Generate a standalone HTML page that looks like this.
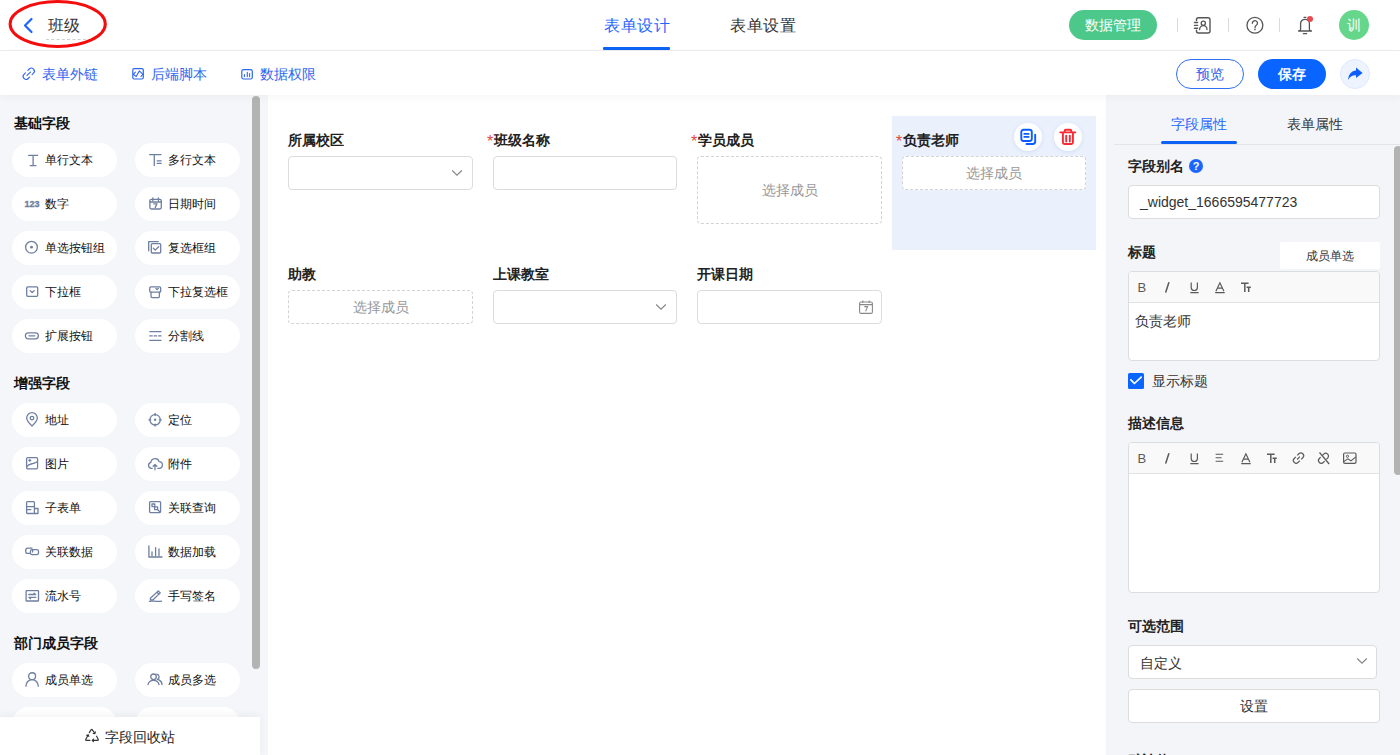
<!DOCTYPE html>
<html><head><meta charset="utf-8">
<style>
*{box-sizing:border-box;margin:0;padding:0}
html,body{width:1400px;height:755px;overflow:hidden;background:#fff;font-family:"Liberation Sans",sans-serif;color:#222}
.abs{position:absolute}
.t{position:absolute;white-space:nowrap;line-height:1}
/* header */
#hdr{position:absolute;left:0;top:0;width:1400px;height:51px;background:#fff;border-bottom:1px solid #ececec}
#bar{position:absolute;left:0;top:51px;width:1400px;height:44px;background:#fff;z-index:3;box-shadow:0 3px 8px rgba(0,0,0,0.035)}
.bluetxt{color:#2c66f0}
/* sidebar */
#side{position:absolute;left:0;top:95px;width:268px;height:660px;background:#f4f6fa}
.sec{position:absolute;left:14px;font-size:14px;font-weight:bold;color:#111;line-height:1}
.fb{position:absolute;width:105px;height:34px;border-radius:17px;background:#fff}
.fb svg{position:absolute;left:12px;top:8px;width:16px;height:16px;overflow:visible}
.fb span{position:absolute;left:33px;top:10px;font-size:12px;line-height:14px;color:#111;white-space:nowrap}
/* canvas */
.lbl{position:absolute;font-size:14px;font-weight:bold;color:#222;line-height:1;white-space:nowrap}
.req{color:#e8443a;font-weight:normal;font-size:16px;display:inline-block;width:6.5px;vertical-align:top;line-height:14px;position:relative;top:1.5px}
.inp{position:absolute;background:#fff;border:1px solid #dcdcdc;border-radius:4px}
.dash{position:absolute;border:1px dashed #d3d3d3;border-radius:4px;color:#999;font-size:14px;text-align:center;white-space:nowrap}
/* right */
#rp{position:absolute;left:1106px;top:95px;width:294px;height:660px;background:#f4f5f9}
.rl{position:absolute;font-size:14px;font-weight:bold;color:#222;line-height:1;white-space:nowrap}
</style></head>
<body>
<!-- HEADER -->
<div id="hdr">
  <svg class="abs" style="left:22px;top:17px" width="12" height="17" viewBox="0 0 12 17"><path d="M9.5 2 L3 8.5 L9.5 15" fill="none" stroke="#1f66ff" stroke-width="2.2" stroke-linecap="round" stroke-linejoin="round"/></svg>
  <div class="t" style="left:48px;top:18px;font-size:16px;color:#333">班级</div>
  <div class="abs" style="left:46px;top:39px;width:40px;border-top:1px dashed #d0d0d0"></div>
  <svg class="abs" style="left:0;top:0" width="120" height="52"><ellipse cx="57.7" cy="24" rx="47.6" ry="22.4" fill="none" stroke="#f50d0d" stroke-width="3"/></svg>

  <div class="t" style="left:604px;top:18px;font-size:16px;color:#1f66ff;letter-spacing:0.5px">表单设计</div>
  <div class="abs" style="left:603px;top:47px;width:67px;height:3px;background:#0b62f5;border-radius:1px"></div>
  <div class="t" style="left:730px;top:18px;font-size:16px;color:#333;letter-spacing:0.5px">表单设置</div>

  <div class="abs" style="left:1069px;top:10px;width:88px;height:30px;border-radius:15px;background:#4cc98a"></div>
  <div class="t" style="left:1085px;top:18px;font-size:14px;color:#fff">数据管理</div>
  <div class="abs" style="left:1177px;top:18px;width:1px;height:14px;background:#dadada"></div>
  <div class="abs" style="left:1228px;top:18px;width:1px;height:14px;background:#dadada"></div>
  <div class="abs" style="left:1279px;top:18px;width:1px;height:14px;background:#dadada"></div>

  <svg class="abs" style="left:1190px;top:12px" width="24" height="26" viewBox="1190 12 24 26"><path d="M1196.5 20.6V19.8A2 2 0 0 1 1198.5 17.8H1208A2 2 0 0 1 1210 19.8V31A2 2 0 0 1 1208 33H1198.5A2 2 0 0 1 1196.5 31V30.2M1194.5 22.5H1197.6M1194.5 25.4H1197.6M1194.5 28.2H1197.6" fill="none" stroke="#555" stroke-width="1.4" stroke-linecap="round"/><circle cx="1203.3" cy="23.2" r="2.1" fill="none" stroke="#555" stroke-width="1.3"/><path d="M1199.6 29.6A3.7 4 0 0 1 1207 29.6" fill="none" stroke="#555" stroke-width="1.3" stroke-linecap="round"/></svg>
  <svg class="abs" style="left:1242px;top:12px" width="26" height="26" viewBox="1242 12 26 26"><circle cx="1254.9" cy="25.25" r="7.95" fill="none" stroke="#555" stroke-width="1.3"/><path d="M1252.3 23.3A2.6 2.5 0 1 1 1256.3 25.3C1255.3 26 1255 26.6 1255 27.8" fill="none" stroke="#555" stroke-width="1.3" stroke-linecap="round"/><circle cx="1255" cy="29.6" r="0.8" fill="#555"/></svg>
  <svg class="abs" style="left:1292px;top:10px" width="26" height="28" viewBox="1292 10 26 28"><path d="M1300.6 29.3V23.5A4.4 4.2 0 0 1 1305 19.3A4.4 4.2 0 0 1 1309.4 23.5V29.3Q1309.6 30.6 1311.4 31H1298.6Q1300.4 30.6 1300.6 29.3ZM1304 17.3H1305.9M1303.4 33.7H1306.6" fill="none" stroke="#555" stroke-width="1.3" stroke-linecap="round" stroke-linejoin="round"/><circle cx="1310" cy="18.9" r="3" fill="#e84a4f"/></svg>
  <div class="abs" style="left:1339px;top:10px;width:30px;height:30px;border-radius:15px;background:#66d68a"></div>
  <div class="t" style="left:1347px;top:18px;font-size:14px;color:#fff">训</div>
</div>
<!-- TOOLBAR -->
<div id="bar">

  <svg class="abs" style="left:18px;top:11px" width="22" height="24" viewBox="18 62 22 24"><g transform="rotate(-45 28.75 73.75)" fill="none" stroke="#2c66f0" stroke-width="1.1" stroke-linecap="round"><path d="M27 70.8H25A2.95 2.95 0 0 0 25 76.7H27M30.5 70.8H32.5A2.95 2.95 0 0 1 32.5 76.7H30.5M26.3 73.75H31.2"/></g></svg>
  <svg class="abs" style="left:127px;top:11px" width="22" height="24" viewBox="127 62 22 24"><rect x="132.8" y="68.6" width="10.5" height="10.4" rx="1.5" fill="none" stroke="#2c66f0" stroke-width="1.2"/><path d="M135.4 72.2L133.3 74.3L136.2 76.6L139.3 70.9L143 74.3L141 76.4" fill="none" stroke="#2c66f0" stroke-width="1.1" stroke-linejoin="round" stroke-linecap="round"/></svg>
  <svg class="abs" style="left:236px;top:11px" width="22" height="24" viewBox="236 62 22 24"><rect x="241.8" y="69.6" width="10.5" height="9.4" rx="1.8" fill="none" stroke="#2c66f0" stroke-width="1.2"/><path d="M244.4 74.6V76.6M247.3 72.4V76.6M249.6 73.6V76.6" fill="none" stroke="#2c66f0" stroke-width="1.1" stroke-linecap="round"/></svg>
  <div class="t bluetxt" style="left:42px;top:16px;font-size:14px">表单外链</div>
  <div class="t bluetxt" style="left:151px;top:16px;font-size:14px">后端脚本</div>
  <div class="t bluetxt" style="left:260px;top:16px;font-size:14px">数据权限</div>
  <div class="abs" style="left:1176px;top:8px;width:68px;height:30px;border:1px solid #2d6ff5;border-radius:15px"></div>
  <div class="t" style="left:1196px;top:16px;font-size:14px;color:#2d62e8">预览</div>
  <div class="abs" style="left:1258px;top:8px;width:68px;height:30px;background:#0a64ff;border-radius:15px"></div>
  <div class="t" style="left:1278px;top:16px;font-size:14px;color:#fff;font-weight:bold">保存</div>
  <div class="abs" style="left:1340px;top:8px;width:30px;height:30px;background:#eef4ff;border:1px solid #dfe8fb;border-radius:15px"></div>

  <svg class="abs" style="left:1338px;top:6px" width="34" height="34" viewBox="1338 57 34 34"><path d="M1356 67.6L1362.6 72.9L1356 78.1V75.2C1352.3 75 1349.6 76.8 1348.1 80.1C1348.4 74.5 1351.5 70.7 1356 70.4Z" fill="#0d5ffc"/></svg>
</div>
<!-- SIDEBAR -->
<div id="side">
  <div class="sec" style="top:21px">基础字段</div>
  <div class="fb" style="left:12px;top:48px"><svg viewBox="0 0 16 16"><path d="M4.6 4.3H13.6M9.1 4.3V14.6M6.2 14.6H12" fill="none" stroke="#6f7fa0" stroke-width="1.3" stroke-linecap="round" stroke-linejoin="round"/></svg><span>单行文本</span></div>
  <div class="fb" style="left:135px;top:48px"><svg viewBox="0 0 16 16"><path d="M2.6 3.6H14M7.3 3.6V14.6M10.2 9.8H14.2M10.2 12.4H14.2" fill="none" stroke="#6f7fa0" stroke-width="1.3" stroke-linecap="round" stroke-linejoin="round"/></svg><span>多行文本</span></div>
  <div class="fb" style="left:12px;top:92px"><svg viewBox="0 0 16 16"><text x="8" y="11.9" text-anchor="middle" font-family="Liberation Sans" font-weight="700" font-size="9" fill="#6f7fa0" stroke="#6f7fa0" stroke-width="0.35">123</text></svg><span>数字</span></div>
  <div class="fb" style="left:135px;top:92px"><svg viewBox="0 0 16 16"><rect x="2.9" y="4.4" width="11.4" height="9.6" rx="1.4" fill="none" stroke="#6f7fa0" stroke-width="1.3" stroke-linecap="round" stroke-linejoin="round"/><path d="M2.9 7H14.3M5.8 3V5.5M11.4 3V5.5M6.8 8.8H10L8.2 12.6" fill="none" stroke="#6f7fa0" stroke-width="1.3" stroke-linecap="round" stroke-linejoin="round"/></svg><span>日期时间</span></div>
  <div class="fb" style="left:12px;top:136px"><svg viewBox="0 0 16 16"><circle cx="7.5" cy="8.2" r="5.85" fill="none" stroke="#6f7fa0" stroke-width="1.3" stroke-linecap="round" stroke-linejoin="round"/><circle cx="7.5" cy="8.2" r="1.4" fill="#6f7fa0"/></svg><span>单选按钮组</span></div>
  <div class="fb" style="left:135px;top:136px"><svg viewBox="0 0 16 16"><path d="M1.7 11.8V2.6H11.2" fill="none" stroke="#6f7fa0" stroke-width="1.3" stroke-linecap="round" stroke-linejoin="round"/><rect x="4.3" y="4.7" width="9.4" height="9.3" rx="1" fill="none" stroke="#6f7fa0" stroke-width="1.3" stroke-linecap="round" stroke-linejoin="round"/><path d="M6.4 9.3L8.3 11.1L11.6 7.7" fill="none" stroke="#6f7fa0" stroke-width="1.3" stroke-linecap="round" stroke-linejoin="round"/></svg><span>复选框组</span></div>
  <div class="fb" style="left:12px;top:180px"><svg viewBox="0 0 16 16"><rect x="2.7" y="3.9" width="11" height="9.4" rx="1" fill="none" stroke="#6f7fa0" stroke-width="1.3" stroke-linecap="round" stroke-linejoin="round"/><path d="M6.2 7.6L8.2 9.5L10.2 7.6" fill="none" stroke="#6f7fa0" stroke-width="1.3" stroke-linecap="round" stroke-linejoin="round"/></svg><span>下拉框</span></div>
  <div class="fb" style="left:135px;top:180px"><svg viewBox="0 0 16 16"><rect x="2.7" y="3.9" width="11" height="5.3" rx="1.2" fill="none" stroke="#6f7fa0" stroke-width="1.3" stroke-linecap="round" stroke-linejoin="round"/><path d="M4 9.2V13.6a1 1 0 0 0 1 1H11.4a1 1 0 0 0 1-1V9.2M8.8 5.4L10 6.6L11.3 5.4" fill="none" stroke="#6f7fa0" stroke-width="1.3" stroke-linecap="round" stroke-linejoin="round"/></svg><span>下拉复选框</span></div>
  <div class="fb" style="left:12px;top:224px"><svg viewBox="0 0 16 16"><rect x="1.4" y="5.9" width="13" height="5.9" rx="2.95" fill="none" stroke="#6f7fa0" stroke-width="1.3" stroke-linecap="round" stroke-linejoin="round"/><path d="M5 8.85H10.8" fill="none" stroke="#6f7fa0" stroke-width="1.3" stroke-linecap="round" stroke-linejoin="round"/></svg><span>扩展按钮</span></div>
  <div class="fb" style="left:135px;top:224px"><svg viewBox="0 0 16 16"><path d="M2.8 4.6H14M2.8 13.4H14M2.8 8.9H5.2M7.2 8.9H9.6M11.6 8.9H14" fill="none" stroke="#6f7fa0" stroke-width="1.3" stroke-linecap="round" stroke-linejoin="round"/></svg><span>分割线</span></div>
  <div class="sec" style="top:281px">增强字段</div>
  <div class="fb" style="left:12px;top:308px"><svg viewBox="0 0 16 16"><path d="M8 15C4.6 11.8 2.7 9.3 2.7 7A5.3 5.3 0 0 1 13.3 7C13.3 9.3 11.4 11.8 8 15Z" fill="none" stroke="#6f7fa0" stroke-width="1.3" stroke-linecap="round" stroke-linejoin="round"/><circle cx="8" cy="7.1" r="1.8" fill="none" stroke="#6f7fa0" stroke-width="1.3" stroke-linecap="round" stroke-linejoin="round"/></svg><span>地址</span></div>
  <div class="fb" style="left:135px;top:308px"><svg viewBox="0 0 16 16"><circle cx="8.1" cy="8.8" r="5.2" fill="none" stroke="#6f7fa0" stroke-width="1.3" stroke-linecap="round" stroke-linejoin="round"/><circle cx="8.1" cy="8.8" r="1.2" fill="#6f7fa0"/><path d="M8.1 2.5V4.4M8.1 13.2V15M1.9 8.8H3.8M12.4 8.8H14.3" fill="none" stroke="#6f7fa0" stroke-width="1.3" stroke-linecap="round" stroke-linejoin="round"/></svg><span>定位</span></div>
  <div class="fb" style="left:12px;top:352px"><svg viewBox="0 0 16 16"><rect x="2.6" y="2.6" width="11" height="11.3" rx="1.3" fill="none" stroke="#6f7fa0" stroke-width="1.3" stroke-linecap="round" stroke-linejoin="round"/><path d="M3 11.5C5.5 7.5 7.5 10.5 13.2 6.8M4.8 5.3H6.8M5.8 4.3V6.3" fill="none" stroke="#6f7fa0" stroke-width="1.3" stroke-linecap="round" stroke-linejoin="round"/></svg><span>图片</span></div>
  <div class="fb" style="left:135px;top:352px"><svg viewBox="0 0 16 16"><path d="M5.2 13.4H4.4A3.1 3.1 0 0 1 3.9 7.3A4.2 4.2 0 0 1 12.1 6.6A3.3 3.3 0 0 1 11.9 13.4H10.8" fill="none" stroke="#6f7fa0" stroke-width="1.3" stroke-linecap="round" stroke-linejoin="round"/><path d="M8 14.8V9.6M6.2 11.3L8 9.5L9.8 11.3" fill="none" stroke="#6f7fa0" stroke-width="1.3" stroke-linecap="round" stroke-linejoin="round"/></svg><span>附件</span></div>
  <div class="fb" style="left:12px;top:396px"><svg viewBox="0 0 16 16"><path d="M10.4 9.5V3.5a0.8 0.8 0 0 0-0.8-0.8H3.4a0.8 0.8 0 0 0-0.8 0.8V13.7a0.8 0.8 0 0 0 0.8 0.8H10.4V9.5H14V14.5H10.4M2.6 7.6H10.4M3 10.6H6.8" fill="none" stroke="#6f7fa0" stroke-width="1.3" stroke-linecap="round" stroke-linejoin="round"/></svg><span>子表单</span></div>
  <div class="fb" style="left:135px;top:396px"><svg viewBox="0 0 16 16"><rect x="2.6" y="2.6" width="11" height="11" rx="1" fill="none" stroke="#6f7fa0" stroke-width="1.3" stroke-linecap="round" stroke-linejoin="round"/><rect x="5" y="5" width="2.8" height="2.6" fill="none" stroke="#6f7fa0" stroke-width="1.3" stroke-linecap="round" stroke-linejoin="round"/><rect x="7.6" y="7.8" width="3" height="2.8" fill="none" stroke="#6f7fa0" stroke-width="1.3" stroke-linecap="round" stroke-linejoin="round"/><path d="M10.6 10.6L13 13" fill="none" stroke="#6f7fa0" stroke-width="1.3" stroke-linecap="round" stroke-linejoin="round"/></svg><span>关联查询</span></div>
  <div class="fb" style="left:12px;top:440px"><svg viewBox="0 0 16 16"><path d="M8 5.2H3.6A1.9 1.9 0 0 0 1.7 7.1V8.5A1.9 1.9 0 0 0 3.6 10.4H5.6" fill="none" stroke="#6f7fa0" stroke-width="1.3" stroke-linecap="round" stroke-linejoin="round"/><rect x="6.4" y="6.7" width="8.1" height="5" rx="1.8" fill="none" stroke="#6f7fa0" stroke-width="1.3" stroke-linecap="round" stroke-linejoin="round"/><path d="M8.6 6.7V9" fill="none" stroke="#6f7fa0" stroke-width="1.3" stroke-linecap="round" stroke-linejoin="round"/></svg><span>关联数据</span></div>
  <div class="fb" style="left:135px;top:440px"><svg viewBox="0 0 16 16"><path d="M1.9 3V14H15M5 8.8V12.6M8.6 4.6V12.6M12 6V12.6" fill="none" stroke="#6f7fa0" stroke-width="1.3" stroke-linecap="round" stroke-linejoin="round"/></svg><span>数据加载</span></div>
  <div class="fb" style="left:12px;top:484px"><svg viewBox="0 0 16 16"><rect x="2.1" y="3.6" width="12.4" height="10.4" rx="0.6" fill="none" stroke="#6f7fa0" stroke-width="1.3" stroke-linecap="round" stroke-linejoin="round"/><path d="M4.8 7.5H11.6L10 6.2M11.8 10.4H5L6.6 11.7" fill="none" stroke="#6f7fa0" stroke-width="1.3" stroke-linecap="round" stroke-linejoin="round"/></svg><span>流水号</span></div>
  <div class="fb" style="left:135px;top:484px"><svg viewBox="0 0 16 16"><path d="M3.4 11.3L11.3 3.9L13.3 5.9L5.8 13H3.4Z M10 5.2L12 7.2" fill="none" stroke="#6f7fa0" stroke-width="1.3" stroke-linecap="round" stroke-linejoin="round"/><path d="M2.5 14.3C5.5 13.4 8.5 14.9 14.5 14.2" fill="none" stroke="#6f7fa0" stroke-width="1.3" stroke-linecap="round" stroke-linejoin="round"/></svg><span>手写签名</span></div>
  <div class="sec" style="top:541px">部门成员字段</div>
  <div class="fb" style="left:12px;top:568px"><svg viewBox="0 0 16 16"><circle cx="8.1" cy="5.2" r="3.45" fill="none" stroke="#6f7fa0" stroke-width="1.3" stroke-linecap="round" stroke-linejoin="round"/><path d="M1.9 15.2A6.2 6.6 0 0 1 14.3 15.2" fill="none" stroke="#6f7fa0" stroke-width="1.3" stroke-linecap="round" stroke-linejoin="round"/></svg><span>成员单选</span></div>
  <div class="fb" style="left:135px;top:568px"><svg viewBox="0 0 16 16"><circle cx="6.5" cy="5.8" r="2.8" fill="none" stroke="#6f7fa0" stroke-width="1.3" stroke-linecap="round" stroke-linejoin="round"/><path d="M1 13.5A5.6 5.2 0 0 1 12 13.5M9.8 3.2A2.8 2.8 0 0 1 10.2 8.6M11.8 8.8A5.6 5.2 0 0 1 15 13.5" fill="none" stroke="#6f7fa0" stroke-width="1.3" stroke-linecap="round" stroke-linejoin="round"/></svg><span>成员多选</span></div>
  <div class="fb" style="left:12px;top:612px"><svg viewBox="0 0 16 16"></svg><span>部门单选</span></div>
  <div class="fb" style="left:135px;top:612px"><svg viewBox="0 0 16 16"></svg><span>部门多选</span></div>
  <div class="abs" style="left:252px;top:1px;width:8px;height:573px;border-radius:4px;background:#b3b3b3"></div>
  <div class="abs" style="left:0;top:622px;width:260px;height:38px;background:#fff;box-shadow:0 -2px 8px rgba(0,0,0,0.05)"></div>
  <svg class="abs" style="left:82px;top:631px" width="20" height="20" viewBox="82 726 20 20"><path d="M89.3 732.6L91.2 729.6Q91.7 728.9 92.2 729.6L94.7 733.3M93.2 733.5L94.9 733.6L95.3 731.9M88.3 734.8L85.7 739.5Q85.4 740.4 86.3 740.4H89.9M86.7 735.3L88.3 734.8L88.8 736.4M96.6 736.2L98.3 739.4Q98.6 740.4 97.6 740.4H92.2M93.5 739.1L92.2 740.4L93.5 741.7" fill="none" stroke="#333" stroke-width="1.15" stroke-linecap="round" stroke-linejoin="round"/></svg>
  <div class="t" style="left:105px;top:635px;font-size:14px;color:#222">字段回收站</div>
</div>
<!-- CANVAS -->
<div id="canvas">
  <div class="lbl" style="left:288px;top:133px">所属校区</div>
  <div class="inp" style="left:288px;top:156px;width:185px;height:34px"></div>
  <svg class="abs" style="left:451px;top:169px" width="12" height="8" viewBox="0 0 12 8"><path d="M1.2 1.5L6 6.2L10.8 1.5" fill="none" stroke="#858585" stroke-width="1.1"/></svg>

  <div class="lbl" style="left:487px;top:133px"><span class="req">*</span>班级名称</div>
  <div class="inp" style="left:493px;top:156px;width:184px;height:34px"></div>

  <div class="lbl" style="left:691px;top:133px"><span class="req">*</span>学员成员</div>
  <div class="dash" style="left:697px;top:156px;width:185px;height:68px;line-height:66px">选择成员</div>

  <div class="abs" style="left:892px;top:116px;width:204px;height:134px;background:#eaf1fd"></div>
  <div class="lbl" style="left:896px;top:133px"><span class="req">*</span>负责老师</div>
  <div class="dash" style="left:902px;top:156px;width:184px;height:34px;line-height:32px;background:#fff">选择成员</div>
  <div class="abs" style="left:1014px;top:123px;width:28px;height:28px;border-radius:14px;background:#fff;box-shadow:0 1px 4px rgba(40,80,160,0.12)"></div>
  <svg class="abs" style="left:1019px;top:128px" width="18" height="18" viewBox="0 0 18 18"><rect x="2.3" y="1.8" width="10.5" height="11.2" rx="2.2" fill="none" stroke="#0a5cff" stroke-width="1.9"/><path d="M5.3 5.9H9.6M5.3 8.9H9.6M16.2 6.6V13.6A2.4 2.4 0 0 1 13.8 16H7.5" fill="none" stroke="#0a5cff" stroke-width="1.9" stroke-linecap="round"/></svg>
  <div class="abs" style="left:1054px;top:123px;width:28px;height:28px;border-radius:14px;background:#fff;box-shadow:0 1px 4px rgba(40,80,160,0.12)"></div>
  <svg class="abs" style="left:1059px;top:128px" width="18" height="18" viewBox="0 0 18 18"><path d="M1.3 4.4H16.3M5.6 4.2V3.2A1.4 1.4 0 0 1 7 1.8H11A1.4 1.4 0 0 1 12.4 3.2V4.2M3.9 4.6V14.5A1.5 1.5 0 0 0 5.4 16H12.4A1.5 1.5 0 0 0 13.9 14.5V4.6M7.2 7.6V13.6M10.8 7.6V13.6" fill="none" stroke="#f52a35" stroke-width="1.9" stroke-linecap="round" stroke-linejoin="round"/></svg>

  <div class="lbl" style="left:288px;top:267px">助教</div>
  <div class="dash" style="left:288px;top:290px;width:185px;height:34px;line-height:32px">选择成员</div>

  <div class="lbl" style="left:493px;top:267px">上课教室</div>
  <div class="inp" style="left:493px;top:290px;width:184px;height:34px"></div>
  <svg class="abs" style="left:655px;top:303px" width="12" height="8" viewBox="0 0 12 8"><path d="M1.2 1.5L6 6.2L10.8 1.5" fill="none" stroke="#858585" stroke-width="1.1"/></svg>

  <div class="lbl" style="left:697px;top:267px">开课日期</div>
  <div class="inp" style="left:697px;top:290px;width:185px;height:34px"></div>
  <svg class="abs" style="left:858px;top:299px" width="16" height="16" viewBox="0 0 16 16"><rect x="1.6" y="3" width="12.8" height="11.4" rx="1.5" fill="none" stroke="#888" stroke-width="1.1"/><path d="M1.6 5.6H14.4M4.8 1.6V4M11.2 1.6V4M6.3 7.6H9.6L7.6 12.4" fill="none" stroke="#888" stroke-width="1.1"/></svg>

</div>
<!-- RIGHT PANEL -->
<div id="rp">
  <div class="t" style="left:65px;top:22px;font-size:14px;color:#1f66ff">字段属性</div>
  <div class="abs" style="left:8px;top:49px;width:286px;height:1px;background:#e3e4e8"></div>
  <div class="abs" style="left:55px;top:46px;width:76px;height:3px;border-radius:2px;background:#0b62f5"></div>
  <div class="t" style="left:181px;top:22px;font-size:14px;color:#333">表单属性</div>
  <div class="abs" style="left:288px;top:51px;width:8px;height:329px;border-radius:4px;background:#b3b3b3"></div>

  <div class="rl" style="left:22px;top:64px">字段别名</div>
  <svg class="abs" style="left:83px;top:64px" width="14" height="14" viewBox="0 0 14 14"><circle cx="7" cy="7" r="7" fill="#1a66ff"/><text x="7" y="11" text-anchor="middle" font-family="Liberation Sans" font-weight="bold" font-size="11" fill="#fff">?</text></svg>
  <div class="inp" style="left:22px;top:90px;width:252px;height:34px"></div>
  <div class="t" style="left:34px;top:99px;font-size:14px;line-height:16px;color:#333">_widget_1666595477723</div>

  <div class="rl" style="left:22px;top:150px">标题</div>
  <div class="abs" style="left:174px;top:147px;width:100px;height:27px;background:#fff;border-radius:2px"></div>
  <div class="t" style="left:200px;top:155px;font-size:12px;color:#333">成员单选</div>

  <div class="abs" style="left:22px;top:176px;width:252px;height:90px;background:#fff;border:1px solid #dcdde1;border-radius:4px;overflow:hidden">
    <div class="abs" style="left:0;top:0;width:250px;height:31px;background:#f9f9fa;border-bottom:1px solid #e1e2e5"></div>
  </div>
  <div class="t" style="left:29px;top:219px;font-size:14px;color:#333">负责老师</div>

  <div class="abs" style="left:22px;top:278px;width:16px;height:16px;border-radius:1.5px;background:#0a64ff"></div>
  <svg class="abs" style="left:22px;top:278px" width="16" height="16" viewBox="0 0 16 16"><path d="M2.9 6.9L6.4 10.5L13.2 4.2" fill="none" stroke="#fff" stroke-width="1.7" stroke-linecap="round" stroke-linejoin="round"/></svg>
  <div class="t" style="left:46px;top:279px;font-size:14px;color:#333">显示标题</div>

  <div class="rl" style="left:22px;top:321px">描述信息</div>
  <div class="abs" style="left:22px;top:347px;width:252px;height:151px;background:#fff;border:1px solid #dcdde1;border-radius:4px;overflow:hidden">
    <div class="abs" style="left:0;top:0;width:250px;height:31px;background:#f9f9fa;border-bottom:1px solid #e1e2e5"></div>
  </div>

  <div class="rl" style="left:22px;top:524px">可选范围</div>
  <div class="inp" style="left:22px;top:550px;width:249px;height:34px"></div>
  <div class="t" style="left:34px;top:561px;font-size:14px;color:#333">自定义</div>
  <svg class="abs" style="left:250px;top:562px" width="12" height="8" viewBox="0 0 12 8"><path d="M1.2 1.5L6 6.2L10.8 1.5" fill="none" stroke="#858585" stroke-width="1.1"/></svg>
  <div class="inp" style="left:22px;top:594px;width:252px;height:34px"></div>
  <div class="t" style="left:134px;top:604px;font-size:14px;color:#333">设置</div>
  <div class="rl" style="left:22px;top:658px">默认值</div>

</div>
<!-- TB -->
<svg class="abs" style="left:1128px;top:272px;z-index:2" width="252" height="30" viewBox="1128 272 252 30"><text x="1137.4" y="292" font-family="Liberation Sans" font-size="13" fill="#5a5a5a">B</text><path d="M1165.8 292L1168.8 282.8" stroke="#5a5a5a" stroke-width="1.5" stroke-linecap="round"/><path d="M1191.2 282.6V287.4a3.1 3.1 0 0 0 6.2 0V282.6M1190.3 292.6H1198.6" fill="none" stroke="#5a5a5a" stroke-width="1.2"/><path d="M1215.9 291.2L1219.9 282.8L1223.9 291.2M1217.6 288.2H1222.2M1215.2 292.7H1224.7" fill="none" stroke="#5a5a5a" stroke-width="1.2"/><path d="M1241 283.3H1248.6M1244.8 283.3V292M1246.6 287.3H1250.8M1248.7 287.3V292" fill="none" stroke="#5a5a5a" stroke-width="1.5"/></svg>
<svg class="abs" style="left:1128px;top:443px;z-index:2" width="252" height="30" viewBox="1128 443 252 30"><text x="1137.4" y="463" font-family="Liberation Sans" font-size="13" fill="#5a5a5a">B</text><path d="M1165.8 463L1168.8 453.8" stroke="#5a5a5a" stroke-width="1.5" stroke-linecap="round"/><path d="M1191.2 453.6V458.4a3.1 3.1 0 0 0 6.2 0V453.6M1190.3 463.6H1198.6" fill="none" stroke="#5a5a5a" stroke-width="1.2"/><path d="M1215.6 454.2H1223.2M1215.6 457.8H1221.6M1215.6 461.2H1223.2" fill="none" stroke="#5a5a5a" stroke-width="1.1"/><path d="M1241.9 462.2L1245.9 453.8L1249.9 462.2M1243.6 459.2H1248.2M1241.2 463.7H1250.7" fill="none" stroke="#5a5a5a" stroke-width="1.2"/><path d="M1267 454.3H1274.6M1270.8 454.3V463M1272.6 458.3H1276.8M1274.7 458.3V463" fill="none" stroke="#5a5a5a" stroke-width="1.5"/><g transform="rotate(-45 1298.5 458.1)" fill="none" stroke="#5a5a5a" stroke-width="1.2"><path d="M1297.5 455.3H1295.2A2.8 2.8 0 0 0 1295.2 460.9H1297.5M1299.5 455.3H1301.8A2.8 2.8 0 0 1 1301.8 460.9H1299.5M1296.5 458.1H1300.5"/></g><g transform="rotate(-45 1323.5 458.3)" fill="none" stroke="#5a5a5a" stroke-width="1.2"><path d="M1322.3 455.5H1320.4A2.8 2.8 0 0 0 1320.4 461.1H1322.3M1324.7 455.5H1326.6A2.8 2.8 0 0 1 1326.6 461.1H1324.7"/></g><path d="M1319.5 452.5L1329.2 464" stroke="#5a5a5a" stroke-width="1.2"/><rect x="1343.6" y="453" width="12.4" height="10.4" rx="1.3" fill="none" stroke="#5a5a5a" stroke-width="1.2"/><circle cx="1347.5" cy="456.3" r="1.1" fill="none" stroke="#5a5a5a" stroke-width="1"/><path d="M1343.8 461.6L1347.8 458.8L1351 460.8L1355.8 456.8" fill="none" stroke="#5a5a5a" stroke-width="1.1"/></svg>
<!-- /TB -->
</body></html>
